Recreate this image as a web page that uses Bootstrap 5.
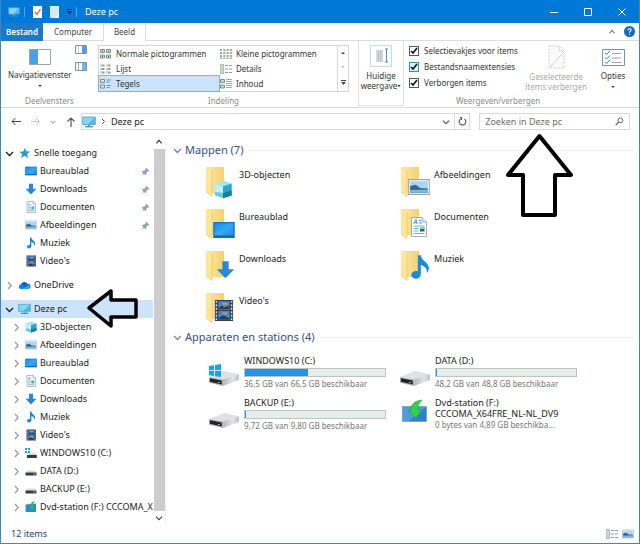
<!DOCTYPE html>
<html lang="nl">
<head>
<meta charset="utf-8">
<meta name="viewport" content="width=device-width, initial-scale=1">
<title>Deze pc</title>
<link href="https://cdn.jsdelivr.net/npm/bootstrap@5.3.0/dist/css/bootstrap.min.css" rel="stylesheet">
<style>
body{font:9px/12px "Noto Sans","Open Sans",sans-serif;color:#222;background:#fff}
button,input,a{font:inherit;color:inherit}
button{background:none;border:0;padding:0}
svg{display:block;flex:none}
.window{border:solid #3c87bd;border-width:0 1px 1px;position:relative;overflow:hidden}
.titlebar{background:#0078d7;color:#fff;height:23px;padding-left:7px}
.titlebar h1{font:inherit;margin:0}
.sep{width:1px;height:10px;background:#4ba3e6}
.win-btn{width:34px;height:23px;display:flex;align-items:center;justify-content:center}
.tabs{height:18px;border-bottom:1px solid #dcdcdc;font-size:8px}
.tabs button{height:18px;color:#444}
.tab-file{background:#1979ca;color:#fff!important;width:42px;font-weight:600}
.tab-pc{width:60px}
.tab-view{width:43px;border:1px solid #dcdcdc!important;border-width:0 1px!important;background:#fff}
.ribbon{height:67px;border-bottom:1px solid #d9dadb;color:#333;font-size:8px}
.group-name{color:#8b8b8b;text-align:center;margin-top:auto}
.g-panes{width:97px;flex:none}
.nav-toggle{padding:8px 0 0 7px}
.g-layout{width:255px;flex:none;padding:4px 4px 0 0}
.g-current{width:46px;flex:none;border:1px solid #dfe3e6;border-top:0;height:65px;margin-left:5px;line-height:10px}
.g-show{flex:1 1 190px;padding-left:5px}
.g-options{width:52px;flex:none}
.two-lines{line-height:10px;margin-top:3px}
.gallery{border:1px solid #d5d5d5}
.gallery-items{display:grid;grid-template-columns:120px 1fr;grid-auto-rows:15px;flex:1}
.gallery-items button{display:flex;align-items:center;gap:4px;text-align:left;padding-left:1px;white-space:nowrap}
.gallery-items .chosen{background:#cce4fb;outline:1px solid #7eb4de}
.gallery-more{width:11px;border-left:1px solid #d5d5d5}
.checks{padding-top:2px}
.check{height:16px;gap:5px}
.check input{width:10px;height:10px;margin:0;appearance:none;border:1px solid #505a64;background:#fff url("data:image/svg+xml,%3Csvg xmlns='http://www.w3.org/2000/svg' viewBox='0 0 8 8'%3E%3Cpath d='M1 4l2 2 4-5' fill='none' stroke='%23111' stroke-width='1.6'/%3E%3C/svg%3E") center/8px no-repeat}
.check input.hot{border-color:#2b93b8;background-color:#d9f2fa}
.addressbar{height:27px;padding:0 9px 0 10px}
.history{gap:10px;margin-right:5px}
.field{height:17px;border:1px solid #d9d9d9}
.address{flex:1 1 390px}
.search{flex:1 1 151px;padding:0 5px;margin-left:9px}
.search input{border:0;outline:0;width:100%;padding:0;color:#555;background:transparent}
.search input::placeholder{color:#6d6d6d;opacity:1}
.reload{width:15px;border-left:1px solid #d9d9d9;height:15px}
.sidebar{width:152px;padding-top:9px}
.sidebar a,.tile{color:#1c1c1c;text-decoration:none;white-space:nowrap}
.tree-row{height:18px;padding-left:4px;gap:3px;overflow:hidden}
.tree-row.child{padding-left:11px}
.tree-row .twist{width:9px;height:9px;margin-right:1px}
.tree-row .pin{margin:0 3px 0 auto}
.tree-row.active{background:#cce4fb}
.gap-row{height:6px}
.scroll{width:12px;color:#444}
.scroll button{height:14px}
.thumb{background:#cdcdcd;width:11px}
.content{border-left:1px solid #f1f1f1;padding:6px 5px 0 7px}
.group-head{font-size:11px;line-height:18px;font-weight:400;color:#35507f;margin:0;gap:3px}
.group-head svg{color:#7a86a0}
.group-head::after{content:"";flex:1;height:1px;background:#ececec;margin-left:3px}
.tiles{padding-left:32px;row-gap:10px}
.tile{width:195px;min-height:32px;display:flex}
.folders{padding-top:8px;padding-bottom:3px}
.folders .tile{gap:4px}
.folders .tile span{padding-top:2px}
.drives{padding-top:9px}
.drives .tile{gap:5px;height:32px}
.drive-info{width:142px}
.disc-info{line-height:11px}
.free{color:#767676;font-size:8px;overflow:hidden;text-overflow:ellipsis;white-space:nowrap}
.meter{height:9px;margin:1px 0;border:1px solid #bcc4c6;border-radius:0;background:#e6eeec}
.meter .progress-bar{background:#2693df}
.status{height:18px;color:#26406d;padding:0 5px 0 10px}
.arrow{position:absolute;pointer-events:none}
.arrow-search{left:504px;top:132px}
.arrow-pc{left:84px;top:288px}
</style>
<script src="https://cdn.jsdelivr.net/npm/bootstrap@5.3.0/dist/js/bootstrap.bundle.min.js"></script>
</head>
<body>
<svg width="0" height="0" class="position-absolute" aria-hidden="true">
<defs>
<linearGradient id="fold" x2="1"><stop stop-color="#ffe9a2"/><stop offset="1" stop-color="#f4d173"/></linearGradient>
<linearGradient id="scr" x2="1" y2="1"><stop stop-color="#1489e3"/><stop offset=".5" stop-color="#35a8f8"/><stop offset="1" stop-color="#1489e3"/></linearGradient>
<linearGradient id="metal" x2="1"><stop stop-color="#b5b7b9"/><stop offset=".6" stop-color="#e3e4e5"/><stop offset="1" stop-color="#bfc1c3"/></linearGradient>
</defs>
<symbol id="right" viewBox="0 0 9 9"><path d="M3 1l3.200 3.500L3 8" fill="none" stroke="#999" stroke-width="1.200"/></symbol>
<symbol id="down" viewBox="0 0 9 9"><path d="M1 3l3.500 3.500L8 3" fill="none" stroke="currentColor" stroke-width="1.300"/></symbol>
<symbol id="up" viewBox="0 0 9 9"><path d="M1.500 6l3-3.500 3 3.500" fill="none" stroke="currentColor" stroke-width="1.400"/></symbol>
<symbol id="caret" viewBox="0 0 5 3"><path d="M0 0h5L2.500 3z" fill="currentColor"/></symbol>
<symbol id="pin" viewBox="0 0 9 9"><path d="M5 .5L8.500 4l-1 .5-.7-.2-1.500 1.600v1.600l-.8.800L.8 4.500l.9-.8h1.600l1.500-1.600L4.500 1zM2.400 5.600l1 1L.7 8.700z" fill="#93a3ad"/></symbol>
<symbol id="star" viewBox="0 0 12 12"><path d="M6.500.8l1.200 3.500 4 .2-3.100 2.400.9 4.200-3.300-2.300L2.500 11l1.200-3.900L.7 4.700l4-.2z" fill="#2c96dd"/></symbol>
<symbol id="desk" viewBox="0 0 12 12"><path d="M.5 2h11v8H.5z" fill="url(#scr)" stroke="#1673c0" stroke-width=".7"/><path d="M.5 9.500h11" stroke="#0d69b3"/></symbol>
<symbol id="dl" viewBox="0 0 12 12"><path d="M4 .8h4v5h3.500L6 11.500.5 5.800H4z" fill="#2b88d8"/></symbol>
<symbol id="doc" viewBox="0 0 12 12"><path d="M2 .5h6l2.500 2.500v8.500H2z" fill="#f8fbfd" stroke="#8296a5" stroke-width=".6"/><path d="M8 .5V3h2.500" fill="#d7e2ea" stroke="#8296a5" stroke-width=".5"/><path d="M3.200 5l1.200-2.500L5.500 5M3.300 6.500h2.200M3.300 8h2.200M3.300 9.700h5.700" fill="none" stroke="#4a9fd7" stroke-width=".7"/><path d="M6.300 5.500h3v3h-3z" fill="#58a9bd"/></symbol>
<symbol id="bigdoc" viewBox="0 0 16 20"><path d="M.5.500h10.500l4.500 4.500v14.500H.5z" fill="#fff" stroke="#8c9aa5" stroke-width=".8"/><path d="M11 .5V5h4.500" fill="#dce8f1" stroke="#8c9aa5" stroke-width=".7"/><path d="M2.500 7l2.500-4.500 1 4.500M3.500 5.500h2.300M8 3.500h2M8 6h3" fill="none" stroke="#388dce" stroke-width=".9"/><path d="M2.500 9h11M2.500 11.500h5M2.500 14h5M2.500 16.500h11" stroke="#63a9d9" stroke-width=".9"/><path d="M9 10.500h4.500v4H9z" fill="#355f7b"/><path d="M9 10.500h4.500v1.500H9z" fill="#91c8e9"/></symbol>
<symbol id="pic" viewBox="0 0 12 12"><path d="M.4 2h11.200v8H.4z" fill="#fff" stroke="#98a4ad" stroke-width=".6"/><path d="M1.200 2.800h9.600v6.400H1.200z" fill="#a8d6f5"/><path d="M1.200 5.500l3-.7 2.500 1.700 4.100.3v2.400H1.200z" fill="#386784"/><path d="M1.200 7.700l9.600-.4v1.900H1.200z" fill="#79b9df"/></symbol>
<symbol id="music" viewBox="0 0 12 12"><path d="M5 .6h1.400c.2 2.600 3.500 3.200 3.700 5.800 0 1-.4 1.800-1 2.400.4-2-.8-3-2.700-3.700v4.200c0 1.200-1.100 2.100-2.400 2.100S2 10.600 2 9.600s1.500-2.100 3-1.600z" fill="#1e88da"/></symbol>
<symbol id="video" viewBox="0 0 12 12"><path d="M1.500.5h9.500v11H1.500z" fill="#34414c"/><path d="M3.300 1.200h5.900v4.500H3.300zM3.300 6.300h5.900v4.500H3.300z" fill="#4785d0"/><path d="M3.500 4.500l2-1.200.5 1.200 3-1v1.800H3.500zM4 9.500l2-1 3 1.500v.7H3.300z" fill="#263c5c"/><path d="M5.500 2h2.500v1H5.500zM5.500 7h2.500v1H5.500z" fill="#c4a84c"/><path d="M2.300 1v10M10.200 1v10" stroke="#d9e1e6" stroke-width=".7" stroke-dasharray="1 .8"/></symbol>
<symbol id="cloud" viewBox="0 0 14 10"><path d="M3 9a2.600 2.600 0 0 1 0-5.100A4 4 0 0 1 10.300 3 3 3 0 0 1 11 9z" fill="#0a64b7"/><path d="M3 4a2.600 2.600 0 0 1 2.500.6L10 9H3a2.600 2.600 0 0 1 0-5z" fill="#1681da"/><path d="M5.500 5l3.200 1.800L11 4a2.600 2.600 0 0 1 0 5H3.500l5-2.200z" fill="#2aa4ec"/></symbol>
<symbol id="pc" viewBox="0 0 14 12"><path d="M.7 1h12.600v7.500H.7z" fill="#45bdec" stroke="#6796b4" stroke-width=".8"/><path d="M1.200 1.500h11.600L6 8H1.200z" fill="#83d8f8"/><path d="M6 8.500h2V10H6z" fill="#8199aa"/><path d="M3 10h8v1.300H3z" fill="#2c94ce"/></symbol>
<symbol id="cube" viewBox="0 0 12 12"><path d="M.8 2.300L6.500.5l5 1.700L6 4z" fill="#a8e5f1"/><path d="M.8 2.300L6 4v7.600L.8 9.700z" fill="#69c8e2"/><path d="M6 4l5.500-1.800v7.600L6 11.600z" fill="#2aa5cb"/><path d="M6 11.600V8.300L11.500 6.500v3.300z" fill="#14809f"/><path d="M.8 2.300L6 4v4L.8 7.500z" fill="#c3eff6"/></symbol>
<symbol id="drv" viewBox="0 0 12 12"><path d="M2.500 5.500h7l2 2h-11z" fill="#d8dadb"/><path d="M.5 7.500h11v3H.5z" fill="#383d40"/><path d="M8.500 9h2" stroke="#8cc9a1"/></symbol>
<symbol id="win" viewBox="0 0 12 12"><path d="M0 1h2v2H0zm3 0h2v2H3zM0 4h2v2H0zm3 0h2v2H3z" fill="#18a9e3"/><path d="M5.500 6h5l1.200 2H2z" fill="#d8dadb"/><path d="M2 8h9.800v3H2z" fill="#383d40"/></symbol>
<symbol id="dvd" viewBox="0 0 12 12"><path d="M.6 3.500L11 2.500V11H.6z" fill="#328ac9"/><path d="M10 0C7 .2 5.500 2 5.600 5H3.500l4 4 2-5H8C8 2.500 8.500 1.200 10 0z" fill="#2cba58"/></symbol>
<symbol id="folder" viewBox="0 0 30 32"><path d="M1 0h18v26H6z" fill="url(#fold)"/><path d="M1 0l6 3.500v26L1 25z" fill="#ffe69b"/><path d="M7 3.500v26L1 25" fill="none" stroke="#e5bd5c" stroke-width=".6"/></symbol>
<symbol id="disk" viewBox="0 0 32 18"><path d="M0 8L16 1.500 32 5 16 11z" fill="#e0e1e2"/><path d="M15 10.500L32 5v6l-17 6.500z" fill="url(#metal)"/><path d="M0 8l15 2.700v6.800L0 14z" fill="#aeb0b2"/><path d="M1 9.300l12.500 2.300v4.300L1 13z" fill="#202326"/><path d="M9.500 13.600l2 .4" stroke="#b5d9cb"/></symbol>
<symbol id="v-norm" viewBox="0 0 12 10"><path d="M.5.500h4v3h-4zm6 0h4v3h-4zm-6 5.500h4v3h-4zm6 0h4v3h-4z" fill="#dbe6df" stroke="#7c9187"/><path d="M2 2h1m5 0h1M2 7.500h1m5 0h1" stroke="#244b3c"/></symbol>
<symbol id="v-small" viewBox="0 0 12 10"><path d="M0 1h12M0 4h12M0 7h12M0 9.500h12" stroke="#9aaba0" stroke-width="2" stroke-dasharray="2 1.300"/></symbol>
<symbol id="v-list" viewBox="0 0 12 10"><path d="M.5 1.500h4m2 0h4m-10 3.500h4m2 0h4m-10 3.500h4m2 0h4" stroke="#8ea397" stroke-width="2"/><path d="M1 1.500h1m5 0h1M1 5h1m5 0h1M1 8.500h1m5 0h1" stroke="#e4f3eb"/></symbol>
<symbol id="v-det" viewBox="0 0 12 10"><path d="M0 .5h3.500v9H0z" fill="#c8d8cd" stroke="#8da095" stroke-width=".6"/><path d="M5 1.500h7M5 5h7M5 8.500h7" stroke="#8c9c94" stroke-dasharray="3 1"/></symbol>
<symbol id="v-tile" viewBox="0 0 12 10"><path d="M.5.500h4v3h-4zm0 5.500h4v3h-4z" fill="#dbe6df" stroke="#7c9187"/><path d="M6.500 1H11M6.500 3h3M6.500 6.500H11M6.500 8.500h3" stroke="#6b96b5"/></symbol>
<symbol id="v-cont" viewBox="0 0 12 10"><path d="M.5.500h4v3h-4zm0 5.500h4v3h-4z" fill="#c8d8cd" stroke="#7c9187"/><path d="M6 .5h6M6 2.500h6M6 4.500h6M6 6.500h6M6 8.500h6" stroke="#8799a0" stroke-width=".8"/></symbol>
<symbol id="mag" viewBox="0 0 10 10"><circle cx="6" cy="3.700" r="2.700" fill="none" stroke="#555"/><path d="M4 5.700L.8 9" stroke="#555" stroke-width="1.300"/></symbol>
</svg>

<div class="window d-flex flex-column min-vh-100">
  <header class="titlebar d-flex align-items-center">
    <svg width="12" height="12"><use href="#pc"/></svg>
    <span class="sep ms-1"></span>
    <button class="ms-2" aria-label="Eigenschappen"><svg width="9" height="12"><path d="M0 0h9v12H0z" fill="#fff"/><path d="M2 6l2 2.500L7.500 3" fill="none" stroke="#dd603c" stroke-width="1.300"/></svg></button>
    <button class="ms-2" aria-label="Nieuwe map"><svg width="9" height="12"><path d="M0 0h9v12H0z" fill="#d5e9fa"/><path d="M9 8v4H5z" fill="#fff"/></svg></button>
    <button class="ms-2" aria-label="Werkbalk aanpassen"><svg width="5" height="5"><path d="M0 .5h5" stroke="#123"/><path d="M0 2h5L2.500 5z" fill="#123"/></svg></button>
    <span class="sep ms-1 me-2"></span>
    <h1 class="me-auto">Deze pc</h1>
    <button class="win-btn" aria-label="Minimaliseren"><svg width="8" height="8"><path d="M0 4.500h8" stroke="#fff"/></svg></button>
    <button class="win-btn" aria-label="Maximaliseren"><svg width="8" height="8"><path d="M.5.500h7v7h-7z" fill="none" stroke="#fff"/></svg></button>
    <button class="win-btn" aria-label="Sluiten"><svg width="8" height="8"><path d="M.5.500l7 7m0-7l-7 7" stroke="#fff"/></svg></button>
  </header>

  <nav class="tabs d-flex" aria-label="Lint">
    <button class="tab-file">Bestand</button><button class="tab-pc">Computer</button><button class="tab-view">Beeld</button>
    <div class="ms-auto d-flex align-items-center gap-2 pe-1">
      <button aria-label="Lint inklappen"><svg width="8" height="8" color="#888"><use href="#up"/></svg></button>
      <button aria-label="Help"><svg width="11" height="11" viewBox="0 0 11 11"><circle cx="5.500" cy="5.500" r="5.500" fill="#0b6cc2"/><path d="M3.900 4.200c0-2 3.200-2 3.200-.1 0 1.200-1.600 1.200-1.600 2.600m0 1v1.200" fill="none" stroke="#fff" stroke-width="1.100"/></svg></button>
    </div>
  </nav>

  <section class="ribbon d-flex">
    <div class="g-panes d-flex flex-column">
      <div class="d-flex">
        <button class="nav-toggle d-flex flex-column align-items-center">
          <svg width="22" height="16"><path d="M.5.500h21v15H.5z" fill="#fff" stroke="#9aa5ae"/><path d="M1 1h8v14H1z" fill="#4c9fe4"/></svg>
          <span class="mt-1">Navigatievenster</span>
          <svg class="mt-1" width="4" height="2"><use href="#caret"/></svg>
        </button>
        <div class="d-flex flex-column gap-2 pt-1 ps-1">
          <button aria-label="Voorbeeldvenster"><svg width="12" height="9"><path d="M.5.500h11v8H.5z" fill="#fff" stroke="#7f8f9d"/><path d="M7 1h4v7H7z" fill="#4c9fe4"/><path d="M3.500 1v7" stroke="#ccc"/></svg></button>
          <button aria-label="Detailvenster"><svg width="12" height="9"><path d="M.5.500h11v8H.5z" fill="#fff" stroke="#7f8f9d"/><path d="M7 1h4v7H7z" fill="#75b6ea"/><path d="M3.500 1v7" stroke="#9ab"/></svg></button>
        </div>
      </div>
      <div class="group-name">Deelvensters</div>
    </div>
    <div class="g-layout d-flex flex-column">
      <div class="gallery d-flex">
        <div class="gallery-items">
          <button><svg width="12" height="10"><use href="#v-norm"/></svg>Normale pictogrammen</button>
          <button><svg width="12" height="10"><use href="#v-small"/></svg>Kleine pictogrammen</button>
          <button><svg width="12" height="10"><use href="#v-list"/></svg>Lijst</button>
          <button><svg width="12" height="10"><use href="#v-det"/></svg>Details</button>
          <button class="chosen"><svg width="12" height="10"><use href="#v-tile"/></svg>Tegels</button>
          <button><svg width="12" height="10"><use href="#v-cont"/></svg>Inhoud</button>
        </div>
        <div class="gallery-more d-flex flex-column justify-content-around align-items-center">
          <button aria-label="Omhoog"><svg width="4" height="2"><path d="M0 2h4L2 0z" fill="#444"/></svg></button>
          <button aria-label="Omlaag"><svg width="4" height="2" color="#bbb"><use href="#caret"/></svg></button>
          <button aria-label="Meer"><svg width="5" height="5"><path d="M0 .5h5" stroke="#444"/><path d="M0 2h5L2.500 5z" fill="#444"/></svg></button>
        </div>
      </div>
      <div class="group-name">Indeling</div>
    </div>
    <button class="g-current d-flex flex-column align-items-center pt-1">
      <svg width="22" height="22"><path d="M.5.500h21v21H.5z" fill="#fbfdfe" stroke="#c6dbe8"/><path d="M6 5h7v12H6z" fill="#d4dadd"/><path d="M8.500 5v12M11 5v12" stroke="#b1bbc0"/><path d="M16.500 4v13M15 4h3M15 17h3" stroke="#4c8db9"/></svg>
      <span class="pt-1">Huidige</span><span class="d-flex align-items-center text-nowrap">weergave<svg width="4" height="2"><use href="#caret"/></svg></span>
    </button>
    <div class="g-show d-flex flex-column">
      <div class="d-flex">
        <div class="checks d-flex flex-column">
          <label class="check d-flex align-items-center text-nowrap"><input type="checkbox" checked>Selectievakjes voor items</label>
          <label class="check d-flex align-items-center text-nowrap"><input type="checkbox" class="hot" checked>Bestandsnaamextensies</label>
          <label class="check d-flex align-items-center text-nowrap"><input type="checkbox" checked>Verborgen items</label>
        </div>
        <button class="d-flex flex-column align-items-center ms-auto pt-1 opacity-75" disabled>
          <svg width="17" height="24"><path d="M1 1h10l5 5v17H1z" fill="#fafafa" stroke="#bbb" stroke-dasharray="2 1.500"/><path d="M2 22L16 7" stroke="#bbb"/><path d="M11 1v5h5" fill="none" stroke="#ccc"/></svg>
          <span class="two-lines text-center text-nowrap text-black-50">Geselecteerde<br>items verbergen</span>
        </button>
      </div>
      <div class="group-name">Weergeven/verbergen</div>
    </div>
    <div class="g-options text-center">
      <button class="d-inline-flex flex-column align-items-center pt-2">
        <svg width="23" height="17"><path d="M.5.500h22v16H.5z" fill="#fff" stroke="#7f8f9d"/><path d="M3 4l1.500 1.500L8 2M3 8.500L4.500 10 8 6.500M3 13l1.500 1.500L8 11" fill="none" stroke="#2785cc"/><path d="M10 4.500h9M10 9h9M10 13.500h9" stroke="#9aa3ab"/></svg>
        <span class="mt-1">Opties</span>
        <svg class="mt-1" width="4" height="2"><use href="#caret"/></svg>
      </button>
    </div>
  </section>

  <div class="addressbar d-flex align-items-center">
    <div class="history d-flex align-items-center">
      <button aria-label="Vorige"><svg width="10" height="9"><path d="M10 4.500H1M4.500 1L1 4.500 4.500 8" fill="none" stroke="#444"/></svg></button>
      <button aria-label="Volgende"><svg width="9" height="9"><path d="M0 4.500h8M5 1l3.500 3.500L5 8" fill="none" stroke="#c4c4c4"/></svg></button>
      <button aria-label="Recente locaties"><svg width="6" height="6" color="#777"><use href="#down"/></svg></button>
      <button aria-label="Omhoog"><svg width="10" height="10"><path d="M5 10V1M1.500 4.500L5 1l3.500 3.500" fill="none" stroke="#555" stroke-width="1.200"/></svg></button>
    </div>
    <div class="address field d-flex align-items-center">
      <svg width="14" height="12"><use href="#pc"/></svg>
      <svg class="ms-1" width="7" height="7"><path d="M2 1l2.500 2.500L2 6" fill="none" stroke="#444"/></svg>
      <a href="#" class="text-decoration-none ms-1">Deze pc</a>
      <button class="ms-auto me-1" aria-label="Adressen"><svg width="8" height="8" color="#555"><use href="#down"/></svg></button>
      <button class="reload d-flex align-items-center justify-content-center" aria-label="Vernieuwen"><svg width="9" height="9"><path d="M2.500 2A3.300 3.300 0 1 0 6.500 2M2 .5h1.500V3" fill="none" stroke="#555" stroke-width="1.100"/></svg></button>
    </div>
    <div class="search field d-flex align-items-center">
      <input type="search" aria-label="Zoeken in Deze pc" placeholder="Zoeken in Deze pc">
      <svg width="9" height="9"><use href="#mag"/></svg>
    </div>
  </div>

  <main class="d-flex flex-grow-1">
    <nav class="sidebar flex-shrink-0" aria-label="Mappen">
      <a href="#" class="tree-row d-flex align-items-center"><svg class="twist"><use href="#down"/></svg><svg width="13" height="12"><use href="#star"/></svg>Snelle toegang</a>
      <a href="#" class="tree-row child d-flex align-items-center"><span class="twist"></span><svg width="12" height="12"><use href="#desk"/></svg>Bureaublad<svg class="pin" width="9" height="9"><use href="#pin"/></svg></a>
      <a href="#" class="tree-row child d-flex align-items-center"><span class="twist"></span><svg width="12" height="12"><use href="#dl"/></svg>Downloads<svg class="pin" width="9" height="9"><use href="#pin"/></svg></a>
      <a href="#" class="tree-row child d-flex align-items-center"><span class="twist"></span><svg width="12" height="12"><use href="#doc"/></svg>Documenten<svg class="pin" width="9" height="9"><use href="#pin"/></svg></a>
      <a href="#" class="tree-row child d-flex align-items-center"><span class="twist"></span><svg width="12" height="12"><use href="#pic"/></svg>Afbeeldingen<svg class="pin" width="9" height="9"><use href="#pin"/></svg></a>
      <a href="#" class="tree-row child d-flex align-items-center"><span class="twist"></span><svg width="12" height="12"><use href="#music"/></svg>Muziek</a>
      <a href="#" class="tree-row child d-flex align-items-center"><span class="twist"></span><svg width="12" height="12"><use href="#video"/></svg>Video's</a>
      <div class="gap-row"></div>
      <a href="#" class="tree-row d-flex align-items-center"><svg class="twist"><use href="#right"/></svg><svg width="13" height="9"><use href="#cloud"/></svg>OneDrive</a>
      <div class="gap-row"></div>
      <a href="#" class="tree-row active d-flex align-items-center"><svg class="twist"><use href="#down"/></svg><svg width="13" height="12"><use href="#pc"/></svg>Deze pc</a>
      <a href="#" class="tree-row child d-flex align-items-center"><svg class="twist"><use href="#right"/></svg><svg width="12" height="12"><use href="#cube"/></svg>3D-objecten</a>
      <a href="#" class="tree-row child d-flex align-items-center"><svg class="twist"><use href="#right"/></svg><svg width="12" height="12"><use href="#pic"/></svg>Afbeeldingen</a>
      <a href="#" class="tree-row child d-flex align-items-center"><svg class="twist"><use href="#right"/></svg><svg width="12" height="12"><use href="#desk"/></svg>Bureaublad</a>
      <a href="#" class="tree-row child d-flex align-items-center"><svg class="twist"><use href="#right"/></svg><svg width="12" height="12"><use href="#doc"/></svg>Documenten</a>
      <a href="#" class="tree-row child d-flex align-items-center"><svg class="twist"><use href="#right"/></svg><svg width="12" height="12"><use href="#dl"/></svg>Downloads</a>
      <a href="#" class="tree-row child d-flex align-items-center"><svg class="twist"><use href="#right"/></svg><svg width="12" height="12"><use href="#music"/></svg>Muziek</a>
      <a href="#" class="tree-row child d-flex align-items-center"><svg class="twist"><use href="#right"/></svg><svg width="12" height="12"><use href="#video"/></svg>Video's</a>
      <a href="#" class="tree-row child d-flex align-items-center"><svg class="twist"><use href="#right"/></svg><svg width="12" height="12"><use href="#win"/></svg>WINDOWS10 (C:)</a>
      <a href="#" class="tree-row child d-flex align-items-center"><svg class="twist"><use href="#right"/></svg><svg width="12" height="12"><use href="#drv"/></svg>DATA (D:)</a>
      <a href="#" class="tree-row child d-flex align-items-center"><svg class="twist"><use href="#right"/></svg><svg width="12" height="12"><use href="#drv"/></svg>BACKUP (E:)</a>
      <a href="#" class="tree-row child d-flex align-items-center"><svg class="twist"><use href="#right"/></svg><svg width="12" height="12"><use href="#dvd"/></svg>Dvd-station (F:) CCCOMA_X</a>
    </nav>
    <div class="scroll d-flex flex-column align-items-center flex-shrink-0">
      <button aria-label="Omhoog schuiven"><svg width="8" height="8"><use href="#up"/></svg></button>
      <div class="thumb flex-grow-1"></div>
      <button aria-label="Omlaag schuiven"><svg width="8" height="8"><use href="#down"/></svg></button>
    </div>
    <section class="content flex-grow-1">
      <h2 class="group-head d-flex align-items-center"><svg width="9" height="9"><use href="#down"/></svg>Mappen (7)</h2>
      <div class="tiles folders d-flex flex-wrap">
        <a href="#" class="tile"><svg width="30" height="32"><use href="#folder"/><use href="#cube" x="8" y="13" width="20" height="19"/></svg><span>3D-objecten</span></a>
        <a href="#" class="tile"><svg width="30" height="32"><use href="#folder"/><use href="#pic" x="8" y="9" width="22" height="22"/></svg><span>Afbeeldingen</span></a>
        <a href="#" class="tile"><svg width="30" height="32"><use href="#folder"/><use href="#desk" x="8" y="10" width="22" height="22"/></svg><span>Bureaublad</span></a>
        <a href="#" class="tile"><svg width="30" height="32"><use href="#folder"/><use href="#bigdoc" x="11" y="8" width="16" height="20"/></svg><span>Documenten</span></a>
        <a href="#" class="tile"><svg width="30" height="32"><use href="#folder"/><use href="#dl" x="11" y="9" width="19" height="19"/></svg><span>Downloads</span></a>
        <a href="#" class="tile"><svg width="30" height="32"><use href="#folder"/><use href="#music" x="7" y="3" width="26" height="26"/></svg><span>Muziek</span></a>
        <a href="#" class="tile"><svg width="30" height="32"><use href="#folder"/><use href="#video" x="7" y="6" width="23" height="23"/></svg><span>Video's</span></a>
      </div>
      <h2 class="group-head d-flex align-items-center"><svg width="9" height="9"><use href="#down"/></svg>Apparaten en stations (4)</h2>
      <div class="tiles drives d-flex flex-wrap">
        <a href="#" class="tile"><svg class="ms-1" width="30" height="32"><use href="#disk" y="14" width="30" height="18"/><path d="M0 11l5-.8v5H0zm6-1l6-.9v6.100H6zM0 16h5v5l-5-.8zm6 0h6v6.100L6 21.200z" fill="#16a5e3"/></svg>
          <div class="drive-info">WINDOWS10 (C:)<div class="progress meter" role="progressbar" aria-label="C:" aria-valuenow="45"><div class="progress-bar" style="width:45%"></div></div><div class="free">36,5 GB van 66,5 GB beschikbaar</div></div></a>
        <a href="#" class="tile"><svg width="30" height="32"><use href="#disk" y="14" width="30" height="18"/></svg>
          <div class="drive-info">DATA (D:)<div class="progress meter" role="progressbar" aria-label="D:" aria-valuenow="1"><div class="progress-bar" style="width:1%"></div></div><div class="free">48,2 GB van 48,8 GB beschikbaar</div></div></a>
        <a href="#" class="tile"><svg class="ms-1" width="30" height="32"><use href="#disk" y="14" width="30" height="18"/></svg>
          <div class="drive-info">BACKUP (E:)<div class="progress meter" role="progressbar" aria-label="E:" aria-valuenow="1"><div class="progress-bar" style="width:1%"></div></div><div class="free">9,72 GB van 9,80 GB beschikbaar</div></div></a>
        <a href="#" class="tile"><svg width="30" height="32"><path d="M2.500 9.500h24v15h-24z" fill="#2e7fcc" stroke="#7fa5bd"/><path d="M3 10h23L9 24H3z" fill="#4f9be0"/><path d="M22 3C14 4 10 8 11 14H8l8 7 6-8h-4c-1-4 1-7 4-10z" fill="#35d04a" stroke="#1ea535" stroke-width=".6"/></svg>
          <div class="drive-info disc-info">Dvd-station (F:)<br>CCCOMA_X64FRE_NL-NL_DV9<div class="free">0 bytes van 4,89 GB beschikba...</div></div></a>
      </div>
    </section>
  </main>

  <footer class="status d-flex align-items-center">
    <span class="me-auto">12 items</span>
    <button class="me-1" aria-label="Details"><svg width="12" height="10"><use href="#v-det"/></svg></button>
    <button aria-label="Grote pictogrammen"><svg width="12" height="12"><use href="#pic"/></svg></button>
  </footer>

  <svg class="arrow arrow-search" width="70" height="88" aria-hidden="true"><path d="M34.500 4L66 43H50v40H18V43H3z" fill="#fff" stroke="#000" stroke-width="4" stroke-linejoin="round"/></svg>
  <svg class="arrow arrow-pc" width="56" height="40" aria-hidden="true"><path d="M4 20L26 3v9h25v17H26v9z" fill="#cce4fb" stroke="#000" stroke-width="3.500" stroke-linejoin="round"/></svg>
</div>
</body>
</html>
